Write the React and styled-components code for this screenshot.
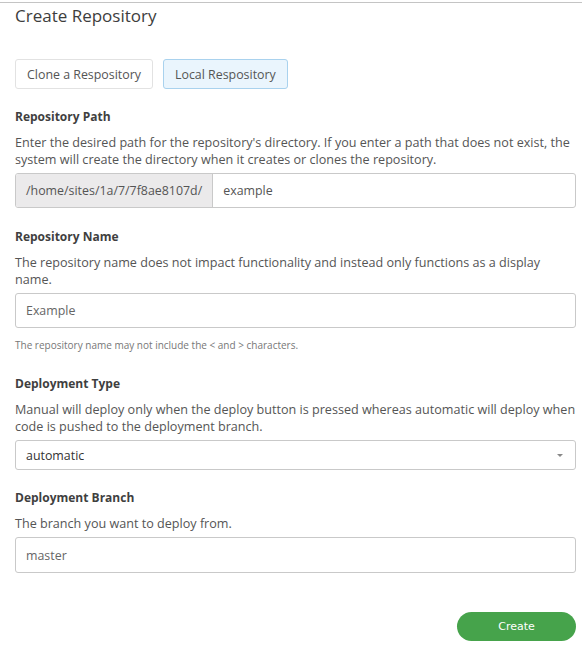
import React from "react";
import styled, { createGlobalStyle } from "styled-components";

const Global = createGlobalStyle`
  body {
    margin: 0;
    background: #fff;
    font-family: "Open Sans", "Noto Sans", sans-serif;
    color: #555;
  }
`;

const Page = styled.div`
  border-top: 1px solid #c4c4c4;
  margin-top: 2px;
  padding: 0 6px 0 15px;
`;

const Title = styled.h1`
  margin: 2px 0 0;
  font-size: 17px;
  font-weight: 400;
  color: #3d3d3d;
  line-height: 22px;
`;

const Tabs = styled.div`
  display: flex;
  gap: 10px;
  margin-top: 32px;
`;

const Tab = styled.button`
  height: 30px;
  padding: 0 11px;
  font-family: inherit;
  font-size: 12.4px;
  color: #555;
  border-radius: 3px;
  border: 1px solid ${p => (p.active ? "#a9d2ee" : "#e2e2e2")};
  background: ${p => (p.active ? "#eaf5fd" : "#fff")};
`;

const Section = styled.section`
  margin-top: ${p => p.top || 20}px;
`;

const Label = styled.div`
  font-size: 12px;
  font-weight: 700;
  color: #3f3f3f;
  line-height: 16px;
`;

const Desc = styled.p`
  margin: 9px 0 5px;
  font-size: 12.6px;
  line-height: 17px;
  color: #555;
`;

const InputGroup = styled.div`
  display: flex;
  height: 35px;
  border: 1px solid #c9c9c9;
  border-radius: 3px;
  overflow: hidden;
  box-sizing: border-box;
`;

const Addon = styled.div`
  display: flex;
  align-items: center;
  padding: 0 10px;
  background: #ebeaeb;
  border-right: 1px solid #c9c9c9;
  font-size: 12.4px;
  color: #555;
`;

const Field = styled.div`
  flex: 1;
  display: flex;
  align-items: center;
  padding: 0 10px;
  font-size: 12.4px;
  color: #555;
`;

const Input = styled.div`
  display: flex;
  align-items: center;
  height: ${p => p.h || 35}px;
  box-sizing: border-box;
  border: 1px solid #c9c9c9;
  border-radius: 3px;
  padding: 0 10px;
  font-size: 12.4px;
  color: ${p => (p.dark ? "#333" : "#666")};
`;

const Select = styled(Input)`
  justify-content: space-between;
  padding-right: 12px;
`;

const Caret = styled.span`
  width: 0;
  height: 0;
  border-left: 3px solid transparent;
  border-right: 3px solid transparent;
  border-top: 3px solid #888;
`;

const Help = styled.div`
  margin-top: 10px;
  font-size: 10px;
  color: #777;
`;

const Footer = styled.div`
  display: flex;
  justify-content: flex-end;
  margin-top: 39px;
`;

const CreateButton = styled.button`
  width: 119px;
  height: 29px;
  border: 0;
  border-radius: 15px;
  background: #46a34b;
  color: #fff;
  font-family: "DejaVu Sans", Verdana, sans-serif;
  font-size: 11px;
`;

export default function App() {
  return (
    <>
      <Global />
      <Page>
        <Title>Create Repository</Title>
        <Tabs>
          <Tab>Clone a Respository</Tab>
          <Tab active>Local Respository</Tab>
        </Tabs>

        <Section top={20}>
          <Label>Repository Path</Label>
          <Desc>
            Enter the desired path for the repository's directory. If you enter a path that does not exist, the
            system will create the directory when it creates or clones the repository.
          </Desc>
          <InputGroup>
            <Addon>/home/sites/1a/7/7f8ae8107d/</Addon>
            <Field>example</Field>
          </InputGroup>
        </Section>

        <Section top={21}>
          <Label>Repository Name</Label>
          <Desc>
            The repository name does not impact functionality and instead only functions as a display name.
          </Desc>
          <Input>Example</Input>
          <Help>The repository name may not include the &lt; and &gt; characters.</Help>
        </Section>

        <Section top={24}>
          <Label>Deployment Type</Label>
          <Desc>
            Manual will deploy only when the deploy button is pressed whereas automatic will deploy when
            code is pushed to the deployment branch.
          </Desc>
          <Select h={30} dark>
            automatic
            <Caret />
          </Select>
        </Section>

        <Section top={20}>
          <Label>Deployment Branch</Label>
          <Desc>The branch you want to deploy from.</Desc>
          <Input h={36}>master</Input>
        </Section>

        <Footer>
          <CreateButton>Create</CreateButton>
        </Footer>
      </Page>
    </>
  );
}
